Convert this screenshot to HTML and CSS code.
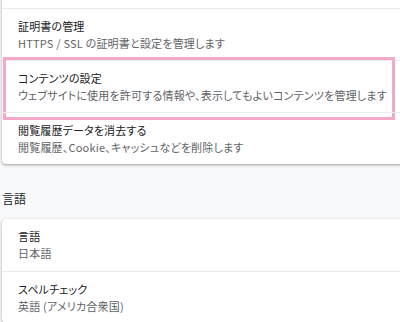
FILE: index.html
```html
<!DOCTYPE html>
<html lang="ja">
<head>
    <meta charset="UTF-8">
    <meta name="viewport" content="width=device-width, initial-scale=1.0">
    <title>設定 - プライバシーとセキュリティ</title>
    <link rel="stylesheet" href="styles.css">
</head>
<body>
    <div class="card card-top">
        <div class="row">
            <div class="row-title">証明書の管理</div>
            <div class="row-sub">HTTPS / SSL の証明書と設定を管理します</div>
        </div>
        <div class="row highlighted">
            <div class="row-title">コンテンツの設定</div>
            <div class="row-sub">ウェブサイトに使用を許可する情報や、表示してもよいコンテンツを管理します</div>
        </div>
        <div class="row">
            <div class="row-title">閲覧履歴データを消去する</div>
            <div class="row-sub">閲覧履歴、Cookie、キャッシュなどを削除します</div>
        </div>
    </div>

    <h2 class="section-title">言語</h2>

    <div class="card">
        <div class="row first">
            <div class="row-title">言語</div>
            <div class="row-sub">日本語</div>
        </div>
        <div class="row">
            <div class="row-title">スペルチェック</div>
            <div class="row-sub">英語 (アメリカ合衆国)</div>
        </div>
    </div>
</body>
</html>
```

FILE: styles.css
```css
html, body {
    overflow: hidden;
}

body {
    font-family: "Noto Sans CJK JP", "Noto Sans", sans-serif;
    font-feature-settings: "palt";
    background-color: #f8f9fa;
    color: #202124;
    margin: 0;
}

.card {
    width: 410px;
    margin-left: 2px;
    background: #fff;
    border-radius: 4px;
    box-shadow: 0 1px 2px rgba(60, 64, 67, 0.3), 0 1px 3px 1px rgba(60, 64, 67, 0.15);
}

.card-top {
    margin-top: -10px;
    padding-top: 18px;
    border-radius: 0 0 4px 4px;
}

.row {
    position: relative;
    height: 52px;
    padding-left: 16px;
    border-top: 1px solid #e8eaed;
    display: flex;
    flex-direction: column;
    justify-content: center;
    box-sizing: border-box;
}

.row.first {
    border-top: none;
}

.row-title {
    font-size: 11px;
    line-height: 17px;
    letter-spacing: 0.15px;
    color: #202124;
}

.row-sub {
    font-size: 11px;
    line-height: 17px;
    letter-spacing: 0.2px;
    color: #5f6368;
    white-space: nowrap;
}

.highlighted::after {
    content: "";
    position: absolute;
    top: -4px;
    left: 1px;
    width: 392px;
    bottom: -8px;
    border: 3px solid #f2a9c9;
    box-sizing: border-box;
    pointer-events: none;
}

.section-title {
    font-size: 12px;
    font-weight: 400;
    line-height: 17px;
    margin: 26px 0 12px 2px;
    color: #202124;
}
```
